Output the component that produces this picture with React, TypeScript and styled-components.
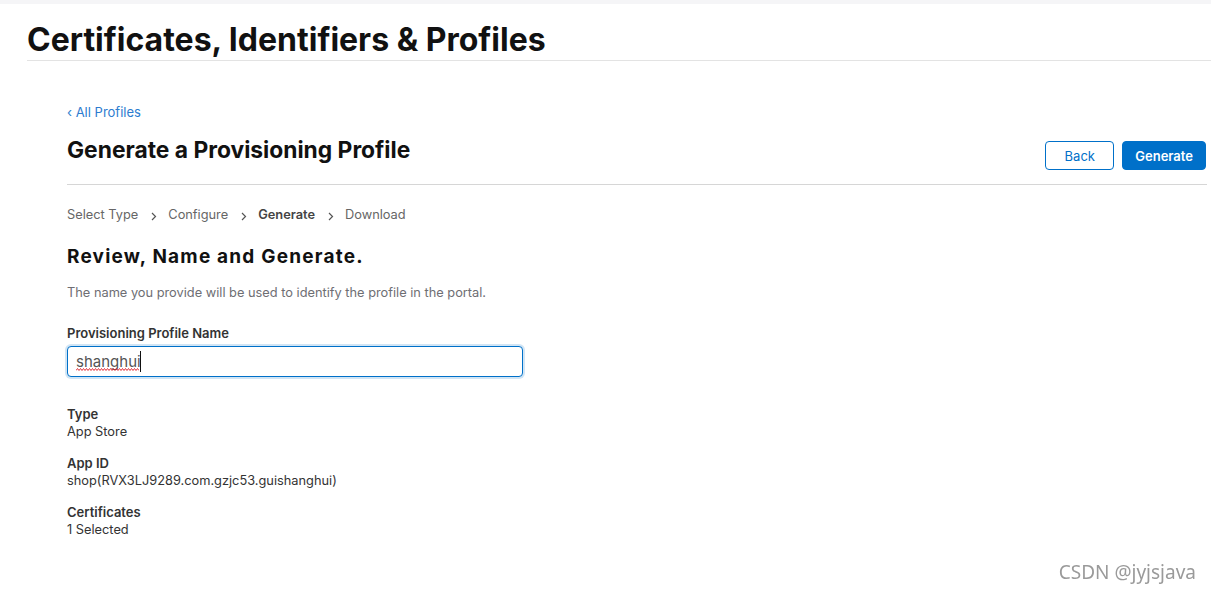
import React from "react";
import styled, { createGlobalStyle } from "styled-components";

const Global = createGlobalStyle`
  html, body { margin: 0; padding: 0; background: #fff; }
  body { font-family: Inter, "Noto Sans", sans-serif; color: #111; -webkit-font-smoothing: antialiased; }
  * { box-sizing: border-box; }
`;

const TopStrip = styled.div`
  height: 4px;
  background: #f5f5f7;
`;

const Header = styled.header`
  margin-left: 27px;
  padding-top: 17px;
  border-bottom: 1px solid #e3e3e3;
`;

const SiteTitle = styled.h1`
  margin: 0;
  font-size: 32px;
  font-weight: 700;
  line-height: 38px;
  padding-bottom: 1px;
`;

const Main = styled.main`
  padding: 0 4px 0 67px;
`;

const BackLink = styled.a`
  display: inline-block;
  margin-top: 42px;
  font-size: 13px;
  line-height: 18px;
  color: #2d7ccf;
  text-decoration: none;
`;

const TitleRow = styled.div`
  display: flex;
  align-items: flex-start;
  justify-content: space-between;
  padding-bottom: 14px;
  border-bottom: 1px solid #d6d6d6;
`;

const PageTitle = styled.h2`
  margin: 15px 0 0;
  font-size: 22.8px;
  font-weight: 700;
  line-height: 28px;
`;

const Buttons = styled.div`
  display: flex;
  gap: 8px;
  margin: 20px 1px 0 0;
`;

const Button = styled.button<{ $primary?: boolean }>`
  height: 29px;
  padding: 0 12px;
  min-width: ${(p) => (p.$primary ? "81px" : "69px")};
  border-radius: 4px;
  font-family: Inter, sans-serif;
  font-size: 13px;
  font-weight: ${(p) => (p.$primary ? 600 : 400)};
  border: 1px solid #0070c9;
  background: ${(p) => (p.$primary ? "#0070c9" : "#fff")};
  color: ${(p) => (p.$primary ? "#fff" : "#0070c9")};
`;

const Steps = styled.ol`
  list-style: none;
  display: flex;
  align-items: center;
  margin: 21px 0 0;
  padding: 0;
  font-size: 12.8px;
  line-height: 18px;
  color: #666;
`;

const Step = styled.li<{ $active?: boolean }>`
  font-weight: ${(p) => (p.$active ? 600 : 400)};
  color: ${(p) => (p.$active ? "#444" : "#666")};
`;

const Chevron = styled.span`
  display: inline-flex;
  margin: 3px 11px 0 13px;
  color: #666;
`;

const SectionTitle = styled.h3`
  margin: 21px 0 0;
  font-size: 19px;
  font-weight: 700;
  letter-spacing: 1.2px;
  line-height: 24px;
`;

const Desc = styled.p`
  margin: 16px 0 0;
  font-size: 12.8px;
  line-height: 16px;
  color: #6e6e73;
`;

const Label = styled.label`
  display: block;
  margin-top: 24px;
  font-size: 13px;
  font-weight: 600;
  line-height: 16px;
  color: #333;
`;

const InputWrap = styled.div`
  position: relative;
  width: 456px;
  margin-top: 5px;
`;

const Input = styled.input`
  display: block;
  width: 100%;
  height: 31px;
  padding: 0 8px;
  border: 1px solid #0070c9;
  border-radius: 4px;
  box-shadow: 0 0 0 2px rgba(0, 112, 201, 0.18);
  font-family: Inter, sans-serif;
  font-size: 15px;
  color: #555;
  outline: none;
`;

const Squiggle = styled.svg`
  position: absolute;
  left: 9px;
  top: 22px;
  pointer-events: none;
`;

const Caret = styled.span`
  position: absolute;
  left: 73px;
  top: 5px;
  width: 1px;
  height: 21px;
  background: #111;
  pointer-events: none;
`;

const Details = styled.dl`
  margin: 28px 0 0;
`;

const Term = styled.dt`
  font-size: 13px;
  font-weight: 600;
  line-height: 18px;
  color: #333;
  &:not(:first-child) { margin-top: 13px; }
`;

const Value = styled.dd`
  margin: 0;
  font-size: 12.8px;
  line-height: 18px;
  color: #333;
`;

const Watermark = styled.div`
  position: fixed;
  right: 15px;
  bottom: 8px;
  font-family: "Noto Sans", sans-serif;
  font-size: 19px;
  color: #9a9a9a;
`;

const ChevronIcon = () => (
  <svg width="6" height="9" viewBox="0 0 6 9" fill="none">
    <path d="M1 1l3.5 3.5L1 8" stroke="#555" strokeWidth="1.2" />
  </svg>
);

const squigglePath = (() => {
  let d = "M0 2.5";
  for (let i = 0; i < 42; i++) d += i % 2 === 0 ? " l1.5 -2" : " l1.5 2";
  return d;
})();

const steps = [
  { label: "Select Type" },
  { label: "Configure" },
  { label: "Generate", active: true },
  { label: "Download" },
];

export default function App() {
  return (
    <>
      <Global />
      <TopStrip />
      <Header>
        <SiteTitle>Certificates, Identifiers &amp; Profiles</SiteTitle>
      </Header>
      <Main>
        <BackLink href="#">‹ All Profiles</BackLink>
        <TitleRow>
          <PageTitle>Generate a Provisioning Profile</PageTitle>
          <Buttons>
            <Button>Back</Button>
            <Button $primary>Generate</Button>
          </Buttons>
        </TitleRow>
        <Steps>
          {steps.map((s, i) => (
            <React.Fragment key={s.label}>
              {i > 0 && (
                <Chevron>
                  <ChevronIcon />
                </Chevron>
              )}
              <Step $active={s.active}>{s.label}</Step>
            </React.Fragment>
          ))}
        </Steps>
        <SectionTitle>Review, Name and Generate.</SectionTitle>
        <Desc>The name you provide will be used to identify the profile in the portal.</Desc>
        <Label htmlFor="name">Provisioning Profile Name</Label>
        <InputWrap>
          <Input id="name" defaultValue="shanghui" spellCheck />
          <Squiggle width="63" height="4" viewBox="0 0 63 4" fill="none">
            <path d={squigglePath} stroke="#e0202a" strokeWidth="0.9" />
          </Squiggle>
          <Caret />
        </InputWrap>
        <Details>
          <Term>Type</Term>
          <Value>App Store</Value>
          <Term>App ID</Term>
          <Value>shop(RVX3LJ9289.com.gzjc53.guishanghui)</Value>
          <Term>Certificates</Term>
          <Value>1 Selected</Value>
        </Details>
      </Main>
      <Watermark>CSDN @jyjsjava</Watermark>
    </>
  );
}
